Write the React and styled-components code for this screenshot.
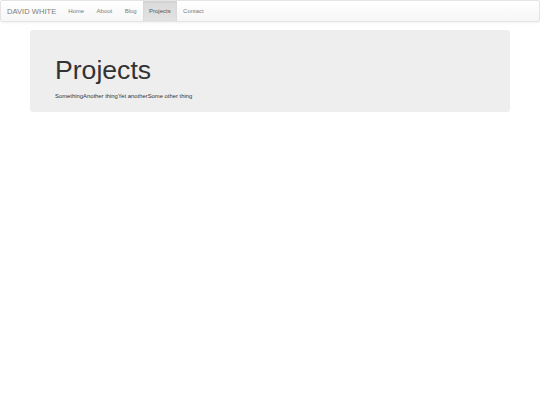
import React from "react";
import styled, { createGlobalStyle } from "styled-components";

const Global = createGlobalStyle`
  html, body { margin: 0; padding: 0; background: #fff; }
  body { font-family: "Liberation Sans", Arial, sans-serif; color: #333; }
  * { box-sizing: border-box; }
`;

const Navbar = styled.nav`
  display: flex;
  align-items: stretch;
  height: 22px;
  background: linear-gradient(to bottom, #ffffff 0%, #f6f6f6 100%);
  border: 1px solid #e4e4e4;
  border-radius: 2px;
  box-shadow: inset 0 1px 0 rgba(255,255,255,.15), 0 1px 3px rgba(0,0,0,.06);
`;

const Brand = styled.a`
  display: flex;
  align-items: center;
  padding: 0 6px 0 6px;
  width: 61px;
  font-size: 7.6px;
  color: #7d7d7d;
  text-decoration: none;
  white-space: nowrap;
`;

const NavList = styled.ul`
  display: flex;
  margin: 0;
  padding: 0;
  list-style: none;
`;

const NavItem = styled.li`
  display: flex;
`;

const NavLink = styled.a`
  display: flex;
  align-items: center;
  padding: 0 6.2px;
  font-size: 6px;
  color: ${p => (p.$active ? "#555" : "#7d7d7d")};
  text-decoration: none;
  background: ${p => (p.$active ? "linear-gradient(to bottom, #dbdbdb 0%, #e2e2e2 100%)" : "transparent")};
  box-shadow: ${p => (p.$active ? "inset 0 1px 3px rgba(0,0,0,.06)" : "none")};
`;

const Container = styled.div`
  width: 480px;
  margin: 8px auto 0;
`;

const Jumbotron = styled.div`
  background: #eeeeee;
  border-radius: 3px;
  padding: 26px 25px 11px;
  height: 82px;
`;

const Heading = styled.h1`
  margin: 0;
  font-size: 26.6px;
  line-height: 1.1;
  font-weight: 400;
  color: #333;
`;

const SubList = styled.ul`
  display: flex;
  margin: 6.5px 0 0;
  padding: 0;
  list-style: none;
  font-size: 5.87px;
  line-height: 8.6px;
  color: #333;
`;

const SubItem = styled.li``;

const links = ["Home", "About", "Blog", "Projects", "Contact"];
const items = ["Something", "Another thing", "Yet another", "Some other thing"];

export default function App() {
  return (
    <>
      <Global />
      <Navbar>
        <Brand href="#">DAVID WHITE</Brand>
        <NavList>
          {links.map(l => (
            <NavItem key={l}>
              <NavLink href="#" $active={l === "Projects"}>{l}</NavLink>
            </NavItem>
          ))}
        </NavList>
      </Navbar>
      <Container>
        <Jumbotron>
          <Heading>Projects</Heading>
          <SubList>
            {items.map(i => <SubItem key={i}>{i}</SubItem>)}
          </SubList>
        </Jumbotron>
      </Container>
    </>
  );
}
